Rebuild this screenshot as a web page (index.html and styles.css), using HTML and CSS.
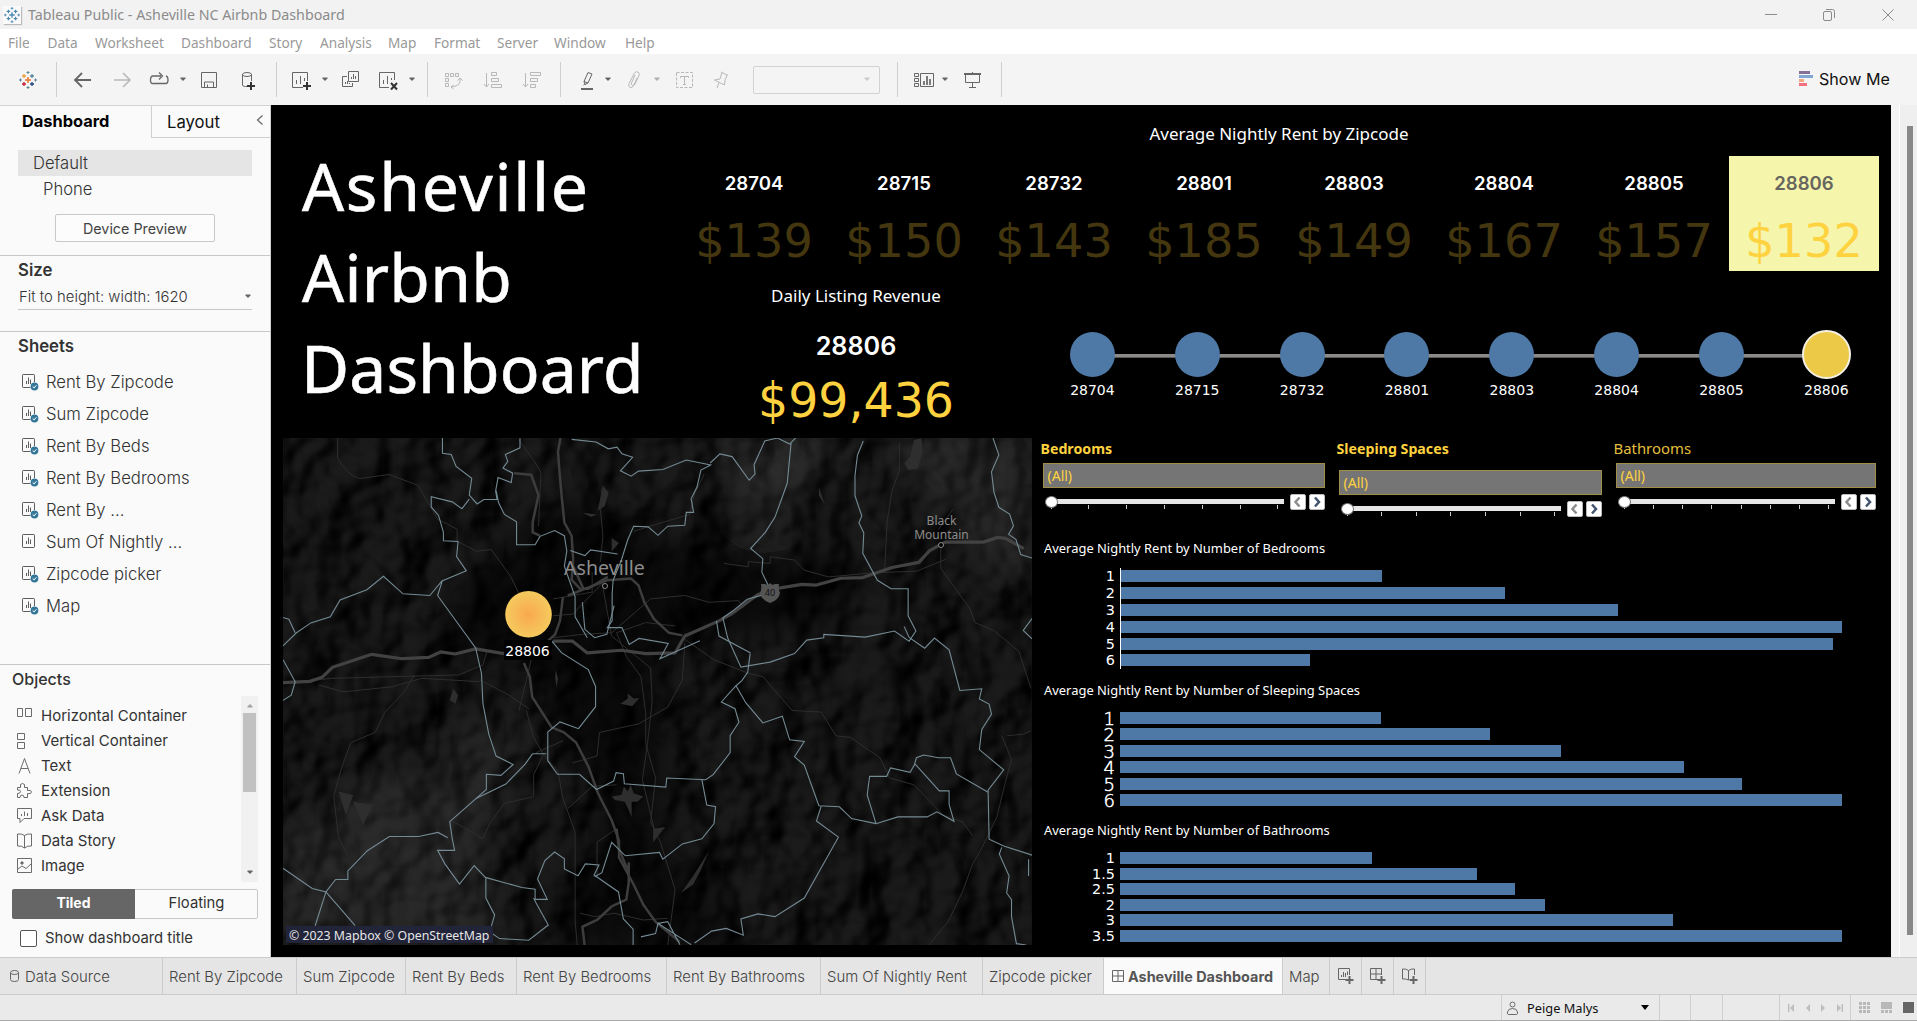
FILE: index.html
```html
<!DOCTYPE html>
<html lang="en">
<head>
<meta charset="utf-8">
<title>Tableau Public - Asheville NC Airbnb Dashboard</title>
<link rel="stylesheet" href="styles.css">
</head>
<body>
<svg class="defs" aria-hidden="true">
  <symbol id="logo" viewBox="0 0 18 18"><g fill="none" stroke-width="1.3">
    <path stroke="var(--c1)" stroke-width="1.5" d="M9 6v6M6 9h6"/>
    <path stroke="var(--c2)" d="M5 3v4M3 5h4"/><path stroke="var(--c3)" d="M13 3v4M11 5h4"/>
    <path stroke="var(--c4)" d="M5 11v4M3 13h4"/><path stroke="var(--c5)" d="M13 11v4M11 13h4"/>
    <path stroke="var(--c3)" stroke-width="1" d="M9 0v3M7.500 1.500h3M1.500 7.500v3M0 9h3M16.500 7.500v3M15 9h3M9 15v3M7.500 16.500h3"/></g></symbol>
  <symbol id="sheet" viewBox="0 0 17 17"><g fill="none" stroke="#5c5c5c">
    <path d="M8.500 13.500H1.200q-.7 0-.7-.7V1.200q0-.7.7-.7h10.600q.7 0 .7.7V8"/><path d="M4.500 10V7M6.500 10V3.500M8.500 10V5.500"/></g>
    <circle cx="12.500" cy="12.500" r="3.900" fill="#35789b"/><path d="M10.700 12.500l1.400 1.400 2.300-2.600" fill="none" stroke="#fff"/></symbol>
  <symbol id="sheet-plain" viewBox="0 0 17 17"><g fill="none" stroke="#5c5c5c"><rect x=".5" y=".5" width="12" height="13" rx=".7"/><path d="M4.500 10V7M6.500 10V3.500M8.500 10V5.500"/></g></symbol>
  <symbol id="caret" viewBox="0 0 8 5"><path d="M1.500 .5h5v1L4 4 1.500 1.500z" fill="currentColor"/></symbol>
</svg>

<div class="window">
  <header class="titlebar">
    <svg class="app-icon" width="18" height="18"><rect width="18" height="18" fill="#fafafa"/><use href="#logo" x="1" y="1" width="16" height="16"/></svg>
    <span class="app-title">Tableau Public - Asheville NC Airbnb Dashboard</span>
    <svg class="win-buttons" width="136" height="16" fill="none" stroke="#8b8b8b"><path d="M1 7.500h12M118.500 2.500l11 11M129.500 2.500l-11 11"/><rect x="59.500" y="4.500" width="8" height="9" rx="1.500"/><path d="M62 2.500h6.500q2 0 2 2V11"/></svg>
  </header>

  <nav class="menubar"><span>File</span><span>Data</span><span>Worksheet</span><span>Dashboard</span><span>Story</span><span>Analysis</span><span>Map</span><span>Format</span><span>Server</span><span>Window</span><span>Help</span></nav>

  <div class="toolbar">
    <svg class="ic color-logo" viewBox="0 0 24 24"><use href="#logo" x="3" y="3" width="18" height="18"/></svg>
    <i class="rule"></i>
    <svg class="ic" viewBox="0 0 24 24"><path stroke-width="1.8" d="M20 12H5M11 5l-7 7 7 7"/></svg>
    <svg class="ic dim" viewBox="0 0 24 24"><path stroke-width="1.500" d="M4 12h15M13 5l7 7-7 7"/></svg>
    <svg class="ic" viewBox="0 0 24 24"><path stroke-width="1.300" d="M14 8H6q-2.500 0-2.500 4T6 15.500h13q2 0 2-3.500t-2-4M12 4.500L15.500 8 12 11.500"/></svg>
    <svg class="caret"><use href="#caret"/></svg>
    <svg class="ic" viewBox="0 0 24 24"><path d="M4.500 4.500h15v15h-15zM7.500 19v-5h9v5M10.500 16.500V19"/></svg>
    <svg class="ic" viewBox="0 0 24 24"><path d="M13 18.500H9.500Q6.500 18.500 6.500 17V6M15.500 13V6"/><ellipse cx="11" cy="6.500" rx="4.500" ry="2"/><path stroke="#333" stroke-width="2" d="M15 14v8M11 18h8"/></svg>
    <i class="rule"></i>
    <svg class="ic" viewBox="0 0 24 24"><path d="M14 19.500H3.500v-15h15V13M7.500 16v-4M11.500 16V8M15.500 13v-3"/><path stroke="#333" stroke-width="2" d="M18 14v8M14 18h8"/></svg>
    <svg class="caret"><use href="#caret"/></svg>
    <svg class="ic" viewBox="0 0 24 24"><path d="M9.500 3.500h10v10h-10zM12.500 11V9M14.500 11V6M16.500 11V8M8 8.500H3.500v10h10V15M6.500 16v-2M8.500 16v-3M10.500 16v-1"/></svg>
    <svg class="ic" viewBox="0 0 24 24"><path d="M13 19.500H3.500v-15h15V12M7.500 16v-4M11.500 16V8M15.500 12v-2"/><path stroke="#333" stroke-width="2" d="M15 15l6 6.500M21 15l-6 6.500"/></svg>
    <svg class="caret"><use href="#caret"/></svg>
    <i class="rule"></i>
    <svg class="ic dim" viewBox="0 0 24 24"><path d="M4.500 5.500h3v3h-3zM9.500 5.500h3v3h-3zM14.500 5.500h3v3h-3zM4.500 10.500h3v3h-3zM4.500 15.500h3v3h-3zM19 10v3q0 5-9 6M16.500 12.500L19 10l2.500 2.500M12.500 17L10 19l2.500 2"/></svg>
    <svg class="ic dim" viewBox="0 0 24 24"><path d="M5.500 5v14M3 16l2.500 3L8 16M10.500 4.500h5v3h-5zM10.500 10.500h7v3h-7zM10.500 16.500h10v3h-10z"/></svg>
    <svg class="ic dim" viewBox="0 0 24 24"><path d="M5.500 5v14M3 16l2.500 3L8 16M10.500 4.500h10v3h-10zM10.500 10.500h7v3h-7zM10.500 16.500h5v3h-5z"/></svg>
    <i class="rule"></i>
    <svg class="ic" viewBox="0 0 24 24"><path d="M9 13.500l4-9 4 1.500-4 9-3 1.500zM9 13.500l4 1.500M8.500 17l1.500-1"/><path stroke-width="2" d="M6 21h12"/></svg>
    <svg class="caret"><use href="#caret"/></svg>
    <svg class="ic dim" viewBox="0 0 24 24"><path d="M13 7l-3.500 8q-.5 2 1 2.300T13 16l4-8.500q1-2.500-1-3.500t-3.500 1L7 15.500q-1 3 1 4 2 .5 3.500-1.500L15 10"/></svg>
    <svg class="caret dim"><use href="#caret"/></svg>
    <svg class="ic dim" viewBox="0 0 24 24"><rect x="4.500" y="4.500" width="16" height="15" stroke-dasharray="3 1.500"/><path d="M8.500 10V8.500h8V10M12.500 8.500v8M11 16.500h3"/></svg>
    <svg class="ic dim" viewBox="0 0 24 24"><path d="M11 4l6 3M12 4.500L10 11l-5.500 1 10 5 .5-5 2.500-5.500M9 14.500L7 20"/></svg>
    <div class="combo"><svg class="caret"><use href="#caret"/></svg></div>
    <i class="rule"></i>
    <svg class="ic" viewBox="0 0 24 24"><path d="M2.500 5.500h4v3h-4zM2.500 10.500h4v3h-4zM2.500 15.500h4v3h-4zM8.500 5.500h13v13h-13z"/><path stroke-width="1.700" d="M12 17v-4M15 17V8M18 17v-6"/></svg>
    <svg class="caret"><use href="#caret"/></svg>
    <svg class="ic" viewBox="0 0 24 24"><path stroke-width="2" d="M3 6h17"/><path d="M4.500 6v8.500h14V6M11.500 4v1M11.500 14.500v5M8 19.500h7"/></svg>
    <i class="rule"></i>
    <div class="show-me"><svg width="14" height="16"><path fill="#85709a" d="M0 0h11v3H0z"/><path fill="#80a6d2" d="M0 4h14v3H0z"/><path fill="#f2a684" d="M0 8h5v3H0z"/><path fill="#f4707f" d="M0 12h8v3H0z"/></svg>Show Me</div>
  </div>

  <main class="workspace">
    <aside class="sidebar">
      <div class="side-tabs"><b>Dashboard</b><div class="layout-tab">Layout<svg width="8" height="10"><path d="M6.500 .5L1.500 5l5 4.500" fill="none" stroke="#666" stroke-width="1.200"/></svg></div></div>
      <section class="device">
        <div class="device-default">Default</div>
        <div class="device-phone">Phone</div>
        <button>Device Preview</button>
      </section>
      <section class="size">
        <h2>Size</h2>
        <div class="size-select">Fit to height: width: 1620<svg class="caret"><use href="#caret"/></svg></div>
      </section>
      <section class="sheets">
        <h2>Sheets</h2>
        <ul>
          <li><svg><use href="#sheet"/></svg>Rent By Zipcode</li>
          <li><svg><use href="#sheet"/></svg>Sum Zipcode</li>
          <li><svg><use href="#sheet"/></svg>Rent By Beds</li>
          <li><svg><use href="#sheet"/></svg>Rent By Bedrooms</li>
          <li><svg><use href="#sheet"/></svg>Rent By ...</li>
          <li><svg><use href="#sheet-plain"/></svg>Sum Of Nightly ...</li>
          <li><svg><use href="#sheet"/></svg>Zipcode picker</li>
          <li><svg><use href="#sheet"/></svg>Map</li>
        </ul>
      </section>
      <section class="objects">
        <h2>Objects</h2>
        <div class="object-box">
          <ul>
            <li><svg><path d="M.5 1.500h5v8h-5zM8.500 1.500h6v8h-6z"/></svg>Horizontal Container</li>
            <li><svg><path d="M.5 1.500h7v6h-7zM.5 10.500h7v6h-7z"/></svg>Vertical Container</li>
            <li><svg><path d="M2 16.500L7.500 1.500 13 16.500M4 11.500h7"/></svg>Text</li>
            <li><svg><path d="M.5 8V5.500h3q-1-4 2-4t2 4h3v3q4-1 4 1.500t-4 1.500v4H7q0-2.500-2-2.500t-2 2.500H.5v-4q3 0 3-2t-3-1.500z"/></svg>Extension</li>
            <li><svg><path d="M.5 1.500h14v10H7l-4 4v-4H.5zM4.500 9V7M7.500 9V4.500M10.500 9V6"/></svg>Ask Data</li>
            <li><svg><path d="M7.500 3.500Q5 1.500.5 2v12q4.500-.5 7 2 2.500-2.500 7-2V2q-4.500-.5-7 1.500V16"/></svg>Data Story</li>
            <li><svg><path d="M.5 1.500h14v14H.5zM1 12l4-3 4 2.500L14 7"/><circle cx="5" cy="6" r="1.200" fill="#6b6b6b"/></svg>Image</li>
          </ul>
          <div class="scroller"><svg class="caret up"><use href="#caret"/></svg><i></i><svg class="caret"><use href="#caret"/></svg></div>
        </div>
        <div class="mode"><b>Tiled</b><span>Floating</span></div>
        <label class="show-title"><i></i>Show dashboard title</label>
      </section>
    </aside>

    <div class="dashboard">
      <div class="top">
        <h1><span class="l1">Asheville</span><span class="l2">Airbnb</span><span class="l3">Dashboard</span></h1>
        <div class="summary">
          <h3>Average Nightly Rent by Zipcode</h3>
          <div class="zips">
            <div><b>28704</b><span>$139</span></div><div><b>28715</b><span>$150</span></div><div><b>28732</b><span>$143</span></div><div><b>28801</b><span>$185</span></div><div><b>28803</b><span>$149</span></div><div><b>28804</b><span>$167</span></div><div><b>28805</b><span>$157</span></div><div class="on"><b>28806</b><span>$132</span></div>
          </div>
          <div class="second">
            <div class="revenue"><h3>Daily Listing Revenue</h3><b>28806</b><span>$99,436</span></div>
            <div class="picker">
              <div><i></i>28704</div><div><i></i>28715</div><div><i></i>28732</div><div><i></i>28801</div><div><i></i>28803</div><div><i></i>28804</div><div><i></i>28805</div><div class="on"><i></i>28806</div>
            </div>
          </div>
        </div>
      </div>

      <div class="bottom">
        <div class="map">
          <svg class="terrain" viewBox="16 24 1536 1500" preserveAspectRatio="none">
            <defs>
              <filter id="relief" x="0" y="0" width="100%" height="100%" color-interpolation-filters="sRGB"><feTurbulence type="fractalNoise" baseFrequency=".009 .006" numOctaves="3" seed="4"/><feDiffuseLighting surfaceScale="50" lighting-color="#1b1b1b"><feDistantLight azimuth="215" elevation="48"/></feDiffuseLighting></filter>
              <filter id="soft"><feGaussianBlur stdDeviation="40"/></filter>
            </defs>
            <rect x="16" y="24" width="1536" height="1500" filter="url(#relief)"/>
            <g filter="url(#soft)">
              <path class="valley" d="M400 430L600 200 780 330 1240 420 1100 560 800 640 790 1200 960 1524 560 1524 690 1080 560 900 560 700 330 640z"/>
              <path class="ridge" d="M400 850l80 60-60 300 20 314H16V1240l130-180 200-60zM1250 24h302v480l-100-150zM880 24h300l-180 300z"/>
            </g>
            <g class="lake"><path d="M1310 30l15-6 3 40-10 50-20 5-8-20 12-20zM672 165l12 20-8 40-15 15zM365 765l10 20-5 25-12-10zM708 810l15-15 0-15 12 15 12-2-15 25zM575 710l5 25-3 28-3-30zM690 1085l20-5 5-25 8 15 6-20 6 25 20 10-12 15-12 0 0 45-14-45-20-5zM775 1180l25-5-25 45zM890 1245l-18 60-15 40-25 25 25-50zM690 320l15 15-15 25zM1115 170l12 50-12-25zM630 245l30 5-12 8zM130 1070l30 10-15 60zM160 1100l40 10-20 60z"/></g>
            <g class="minor">
              <path d="M128 24v60q20 50 45 60l60-12 60 32 40 100 40 30 0 35 40 30 30-5 40 80 20 60 30 35M500 30l30 60 15 35-5 160M670 175l-3 60 5 80-5 75M735 300l45-20 70-30 10-60 20-60M920 395l50 10 0-15 45 5 0-20 50 10 20 30 50 20 90-12 90-5 60-35M1280 40l0 80-15 60-10 90-5 140M1365 350v60l30 60 30 60 10 40 40 25 50 60 25 110M1390 235l-30 60M1500 905l35-5 15-10M1490 905l20 70-15 80-15 90-30 90-20 50-20 80-30 90-40 70"/>
              <path d="M16 750l100-15 260-10 50-30 8-40M90 755l50 20 100-15 60-25 120 10M285 725l-20 50-40 60-20 60-50 30-20 80-15 80 10 120 20 60M420 740l60 45 40 40M570 500l80-20 0-60M570 550l40-5 60-90M570 615l60-10 60-5 80-100 70-10 50 20 60-5 10 20M700 600l60-30 60 10M700 600l20 70 30 60 10 110 0 90 20 100-10 130 20 60 30 140-20 220M670 450l20 160 80 95 3 100-10 130-10 100 25 150M840 620l60 60 70 40 30 10 60 100 60 5 30 70 30 5 60 60 20 60 50 20 60 90 40 20 20 40"/>
              <path d="M840 630l-5 110-30 80-60 50-80 25-5 70-50 20M500 830l15-90 10-60M515 830l15 80 20 50 30 50 10 80 25 100 0 260 10 174M600 1120l50-65 50-5M550 960l-20 60 0 65-60 20-30 60-15 45-15-15-50-40M700 1180l-40 40 0 100M590 920l-55 35M625 1430l30 10 40-10 60 20 50-5"/>
            </g>
            <g class="major">
              <path d="M585 24l-5 40 3 60 5 80 5 70 15 40 3 70-3 60 20 30M490 128l35 5 15 60-12 80 0 30 15 10M600 490l80-45 50-5 15 20 12 50 20 50 30 40 28 8M590 495l-6 70-10 40-15 20M510 690l12 40 5 60 40 90 25 15 25 30 25 70 20 80 28 80 15 60 0 50 30 80 20 60 25 50 50 60"/>
              <path d="M610 400l22 70 10 0 40-35M700 1180l5 60 20 70M725 1280l0 60-5 50-30 20-30 40-30 20 5 60"/>
            </g>
            <path class="highway" d="M16 748l55-4 25-12 22-30 80-38 62 13 55-4 24-16 30 6 42-15 58 14M570 625l40 0 30 35 70-8 50 10 60-2 20-50 70-45 25-20 55-58 40-18 50-12 30 2 50-20 45-2 60-30 55-15 22-35 32-25 78 0 30-14 16 3 37 30"/>
            <g class="bounds">
              <path d="M343 24v45l18 4 10 35 32 35-5 50 16 26 14-13 27 0-3-25 5-40 27 15 3-28-20-15 10-20-5-20 30-20v-28M453 180l5 35 12 35 25 22v68l38 0 10-25 30-17 20 15 5 45-5 45 22 90 0 60 25 62"/>
              <path d="M398 205l-15 28-20-20-43-15 0 30 15 25 10 50 0 25 30 2-3 45 20 42-50 30-25 43-55-5-40-52-34 40-55 30-20 50-40 18-30 30-65 90M343 445l-10 45 78 155 12 75 3 90 12 90 15 65 35 25-25 32-30-3 0 45-75 95 5 50 5 35-35 0 15 40 30 60 30-55 23 35 75 30 27 5 0 30 25 0-20-60 15-55 20-25 20 20 0 30 28 20 15-35 28 3-10 30 50 50 10 80 20 30 0 60"/>
              <path d="M608 28l50 8 25 20 18-5 10 20 22 10-25 40 22 16 15-15 50-5 48-28 50 15-20 15-8 50-12 35 5 40-15 0-3 38-35 3-20 27-20-25-30-2-12 40-13 60-17 60-2 40 0 80-10 20 30 0 15 50 20-18 60 15-17 45 82-53"/>
              <path d="M892 98l20-27 25 8 35 70 12-18-2-28 22-70 26-9 25 18 12-18M1058 38l-8 120-25 100-20 45-30 48 25 30-2 40 20 60-50 20-30 35-20 20 10 60 27 86 60-15 50-25 25-40 35-7 0-10 85 8 60-18 30 30 14-30-16-45 0-80-35 0-28-25-30-80 2-60-10-30 6-20-14-60 0-60 5-60 12-42M1290 582l10 32 32 32 20-30 30 35 22 120 45-5-5 30 20 15 5 30-20 45-5 60 50 60-32 60 2 145 30 20 60 28"/>
              <path d="M974 662l-5 55-12 25-12 15-30 48 28 20 8 40-18 40 0 50-35 65-15 15-80-5-2 27-85-10-2-30-15-3-5 25-35 25-35-45-45 0-20-40v-85l25-30 38 20 35-65 0-60-15-50-55-50-20-35M975 660l-65-50-5-45"/>
              <path d="M945 757l20 50 35 60 40-20 15 70 30 5-20 45 20 25 15 60 15 60 42 3 25 35 50 15 45-20 60 0 20-15 35 28-10-50 0-40-20 0-50-80-10 25-40-13-8 25-35 0-5 55 18 85M1310 995l5-25 15-8 30 8 25 0 12 48 65 54M1120 1112l-10 45 45 48-70 180-60 55-35-8-35 15 5 48-35-20-30 8-35 35"/>
              <path d="M875 1035l10 75 18 5-3 50-25 45-40 15-40 45-7-20-70 10-28-40-20 90-15 12M528 958h28M528 958l-15 30-40 60-60 42M16 555l12 5 13 40M16 680l25 65-8 40-17 15M16 1297l60 60 28 10-22 100M104 1367l60 100M104 1367l20-37 25 0 0-25 40-60 45-42 60 0 40-12 20 16M432 1325l0 60 18 50-10 50 20 20 60 5 40-45-25-65-5-15M785 1460l20-5 25 68M750 1500l30-10 5-30 68 63M1472 24l12 50-15 50 5 60 10 45 22 20 8 35-10 25 15 15 10 45 23 10M1552 558l-18 35 18 25M1490 1235l-5 20 20 65-5 50 10 20 0 50 10 80 20 4M1545 1270v50M605 357l30 15 12-17 55 12M630 510l5 80 20 25 25-10 15-85"/>
            </g>
          </svg>
          <svg class="marks" viewBox="0 0 749 507">
            <defs><radialGradient id="sun"><stop offset="0" stop-color="#f9a84f"/><stop offset="1" stop-color="#f5ca5d"/></radialGradient></defs>
            <path d="M478 146h4q3 2 5-1 2 3 5 1h4q-1 5 1 9-1 7-10 10-9-3-10-10 2-4 1-9z" fill="#555"/>
            <text class="shield" x="487" y="158">40</text>
            <text class="city" x="321.500" y="136.500">Asheville</text><circle class="dot" cx="322" cy="148" r="2.500"/>
            <text class="town" x="658.500" y="86.500">Black</text><text class="town" x="658.500" y="100.500">Mountain</text><circle class="dot" cx="658" cy="107" r="2.500"/>
            <circle cx="245.500" cy="176.300" r="23.300" fill="url(#sun)"/>
            <rect x="221" y="202" width="48" height="20" fill="#000" opacity=".9"/><text class="mark-label" x="244.500" y="217.500">28806</text>
            <rect x="3" y="488" width="207" height="17" fill="#22243a"/><text class="credit" x="6" y="501.500">© 2023 Mapbox © OpenStreetMap</text>
          </svg>
        </div>

        <div class="detail">
          <div class="filters">
            <div class="filter f1"><b>Bedrooms</b><div class="value">(All)</div><div class="slider"><div class="track"><i></i><i></i><i></i><i></i><i></i><i></i><i></i></div><svg class="step"><path d="M9.500 3.500l-4 4.500 4 4.500"/></svg><svg class="step next"><path d="M6 3.500l4 4.500-4 4.500"/></svg></div></div>
            <div class="filter f2"><b>Sleeping Spaces</b><div class="value">(All)</div><div class="slider"><div class="track"><i></i><i></i><i></i><i></i><i></i><i></i><i></i></div><svg class="step"><path d="M9.500 3.500l-4 4.500 4 4.500"/></svg><svg class="step next"><path d="M6 3.500l4 4.500-4 4.500"/></svg></div></div>
            <div class="filter f3"><span>Bathrooms</span><div class="value">(All)</div><div class="slider"><div class="track"><i></i><i></i><i></i><i></i><i></i><i></i><i></i><i></i></div><svg class="step"><path d="M9.500 3.500l-4 4.500 4 4.500"/></svg><svg class="step next"><path d="M6 3.500l4 4.500-4 4.500"/></svg></div></div>
          </div>
          <section class="chart beds"><h4>Average Nightly Rent by Number of Bedrooms</h4>
            <div class="bars">
              <div><span>1</span><i style="width:261px"></i></div><div><span>2</span><i style="width:384px"></i></div><div><span>3</span><i style="width:497px"></i></div><div><span>4</span><i style="width:721px"></i></div><div><span>5</span><i style="width:712px"></i></div><div><span>6</span><i style="width:189px"></i></div>
            </div></section>
          <section class="chart spaces"><h4>Average Nightly Rent by Number of Sleeping Spaces</h4>
            <div class="bars">
              <div><span>1</span><i style="width:261px"></i></div><div><span>2</span><i style="width:370px"></i></div><div><span>3</span><i style="width:441px"></i></div><div><span>4</span><i style="width:564px"></i></div><div><span>5</span><i style="width:622px"></i></div><div><span>6</span><i style="width:722px"></i></div>
            </div></section>
          <section class="chart baths"><h4>Average Nightly Rent by Number of Bathrooms</h4>
            <div class="bars">
              <div><span>1</span><i style="width:252px"></i></div><div><span>1.5</span><i style="width:357px"></i></div><div><span>2.5</span><i style="width:395px"></i></div><div><span>2</span><i style="width:425px"></i></div><div><span>3</span><i style="width:553px"></i></div><div><span>3.5</span><i style="width:722px"></i></div>
            </div></section>
        </div>
      </div>
    </div>
    <div class="vscroll"><i></i></div>
  </main>

  <div class="tabs">
    <span><svg width="9" height="12"><path d="M.5 2.500v7q0 2 4 2t4-2v-7M.5 2.500q0-2 4-2t4 2-4 2-4-2"/></svg>Data Source</span><span>Rent By Zipcode</span><span>Sum Zipcode</span><span>Rent By Beds</span><span>Rent By Bedrooms</span><span>Rent By Bathrooms</span><span>Sum Of Nightly Rent</span><span>Zipcode picker</span><span class="active"><svg width="12" height="12"><path d="M.5 .5h11v11H.5zM6 .5v11M.5 6h11"/></svg>Asheville Dashboard</span><span>Map</span>
    <span><svg width="16" height="16"><path d="M8 11.500H.5V.5h11V7M3.500 9V7M5.500 9V4M7.500 9V5M9.500 7V3.500"/><path stroke-width="2" d="M11.500 8v8M7.500 12h8"/></svg></span>
    <span><svg width="16" height="16"><path d="M8 11.500H.5V.5h11V7M6 .5v11M.5 6h11"/><path stroke-width="2" d="M11.500 8v8M7.500 12h8"/></svg></span>
    <span><svg width="16" height="16"><path d="M6.500 2.500Q4 .5.500 1v10q3-.5 6 1V2.500Q9 .5 12.500 1v6"/><path stroke-width="2" d="M11.500 8v8M7.500 12h8"/></svg></span>
    <span class="rest"></span>
  </div>

  <footer class="status">
    <div></div>
    <div class="user"><svg width="11" height="14" fill="none" stroke="#6b6b6b"><circle cx="5.500" cy="3.500" r="2.500"/><path d="M1.500 13.500q-1.500 0-1-2.500.5-3.500 5-3.500t5 3.500q.5 2.500-1 2.500z"/></svg>Peige Malys<svg class="caret"><path d="M0 0h8L4 5z"/></svg></div>
    <div></div><div></div><div></div>
    <div class="pager"><svg width="58" height="10" fill="#bdbdbd"><path d="M0 1h1.500v8H0zM6 1v8L2 5zM22 1v8l-4-4zM33 1v8l4-4zM49 1v8l4-4zM53.500 1H55v8h-1.500z"/></svg></div>
    <div class="views"><svg width="56" height="12"><path fill="#b8b8b8" d="M0 0h3v3H0zM4 0h3v3H4zM8 0h3v3H8zM0 4h3v3H0zM4 4h3v3H4zM8 4h3v3H8zM0 8h3v3H0zM4 8h3v3H4zM8 8h3v3H8zM22 0h11v7H22zM22 8h3v3h-3zM26 8h3v3h-3zM30 8h3v3h-3z"/><path fill="#666" d="M44 0h11v11H44z"/></svg></div>
  </footer>
</div>
</body>
</html>
```
FILE: styles.css
```css
* { box-sizing: border-box; }
body { margin: 0; background: #f4f4f4; font-family: Inter, "Liberation Sans", sans-serif; color: #333; }
h1, h2, h3, h4, ul { margin: 0; padding: 0; font-weight: 400; list-style: none; }
.defs { position: absolute; width: 0; height: 0; }
.window { display: flex; flex-direction: column; width: 1917px; height: 1021px; overflow: hidden; white-space: nowrap; }
.caret { display: block; width: 8px; height: 5px; color: #666; }

.titlebar { display: flex; align-items: center; height: 29px; padding-left: 3px; background: #f2f2f2; font: 14.25px "Noto Sans", sans-serif; color: #8b8b8b; }
.app-icon { --c1: #4b88b0; --c2: #4b88b0; --c3: #4b88b0; --c4: #4b88b0; --c5: #4b88b0; box-shadow: 1px 1px 1px #bbb; }
.app-title { margin-left: 7px; }
.win-buttons { margin-left: auto; margin-right: 17px; }

.menubar { display: grid; grid-template-columns: 39.5px 47.5px 86px 88px 51px 68px 46px 63px 57px 71px auto; align-items: center; height: 25px; padding: 2px 0 0 8px; background: #fff; font: 13.65px "Noto Sans", sans-serif; color: #999; }

.toolbar { display: grid; grid-template-columns: 40px 15px 39px 37px 32px 18px 39px 40px 13px 32px 18px 37px 32px 19px 14px 40px 39px 40px 15px 29px 18px 31px 19px 38px 43px 144px 15px 29px 20px 40px 798px auto; align-items: center; justify-items: start; height: 51px; padding-left: 16px; background: #f4f4f4; }
.ic { width: 24px; height: 24px; fill: none; stroke: #666; }
.ic.dim { stroke: #b8b8b8; }
.caret.dim { color: #b0b0b0; }
.color-logo { --c1: #e8762c; --c2: #e8a33c; --c3: #5b879b; --c4: #c72037; --c5: #1f447e; }
.rule { width: 1px; height: 35px; background: #cfcfcf; }
.combo { display: flex; align-items: center; justify-content: flex-end; width: 127px; height: 28px; padding-right: 8px; border: 1px solid #d2d2d2; border-radius: 2px; }
.combo .caret { color: #ccc; }
.show-me { display: flex; align-items: center; gap: 6px; margin-top: -2px; font-size: 16.1px; color: #111; }

.workspace { display: flex; height: 852px; }
.sidebar { display: flex; flex-direction: column; width: 271px; border-top: 1px solid #d2d2d2; border-right: 1px solid #cfcfcf; background: #fafafa; }
.side-tabs { display: flex; height: 32px; }
.side-tabs b { width: 151px; padding: 4px 0 0 22px; font-size: 16.4px; line-height: 22px; color: #000; }
.layout-tab { display: flex; flex: 1; align-items: center; justify-content: space-between; padding: 0 6px 0 15px; border-left: 1px solid #cfcfcf; border-bottom: 1px solid #cfcfcf; font-size: 16.7px; color: #111; }
.layout-tab svg { margin-top: -4px; }
.device { height: 118px; padding: 12px 18px 0; border-bottom: 1px solid #c8c8c8; font-size: 16.600px; font-weight: 300; }
.device-default { height: 26px; padding-left: 15px; line-height: 26px; background: #e5e5e5; }
.device-phone { height: 26px; padding-left: 25px; line-height: 26px; }
.device button { display: block; width: 160px; height: 28px; margin: 12px 0 0 37px; padding: 0; border: 1px solid #c8c8c8; border-radius: 2px; background: #fcfcfc; font: 400 14.3px Inter, sans-serif; color: #444; }
.size { height: 76px; padding: 3px 18px 0; border-bottom: 1px solid #c8c8c8; }
.sidebar h2 { font-size: 16.800px; font-weight: 600; line-height: 22px; }
.size-select { display: flex; align-items: center; justify-content: space-between; height: 26px; margin-top: 3px; padding-left: 1px; border-bottom: 1px solid #c8c8c8; font-size: 14.850px; font-weight: 300; }
.sheets { height: 333px; padding: 3px 18px 0; border-bottom: 1px solid #c8c8c8; }
.sheets ul { margin-top: 9px; }
.sheets li { display: flex; align-items: center; height: 32px; padding-left: 4px; font-size: 16.700px; font-weight: 300; }
.sheets svg { width: 17px; height: 17px; margin-right: 7px; }
.objects { padding: 3px 12px 0; }
.sidebar .objects h2 { font-size: 16px; font-weight: 500; }
.object-box { display: flex; justify-content: space-between; height: 186px; margin-top: 6px; }
.object-box ul { padding: 7px 0 0 5px; }
.object-box li { display: flex; align-items: center; height: 25px; font-size: 15px; }
.object-box li svg { width: 17px; height: 17px; margin-right: 7px; fill: none; stroke: #6b6b6b; }
.scroller { display: flex; flex-direction: column; align-items: center; width: 17px; padding: 7px 0; background: #f1f1f1; }
.scroller i { width: 13px; height: 79px; margin: 5px 0 auto; background: #c1c1c1; }
.scroller .up { transform: rotate(180deg); color: #a3a3a3; }
.mode { display: flex; height: 30px; margin-top: 7px; border: 1px solid #c8c8c8; border-radius: 2px; font-size: 14.8px; line-height: 27px; text-align: center; }
.mode b { width: 123px; margin: -1px; height: 30px; background: #666; color: #fff; border-radius: 2px 0 0 2px; font-size: 14px; }
.mode span { flex: 1; padding-left: 2px; color: #333; }
.show-title { display: flex; align-items: center; margin: 11px 0 0 8px; font-size: 14.850px; line-height: 17px; }
.show-title i { width: 17px; height: 17px; margin-right: 8px; border: 1px solid #555; border-radius: 2px; background: #fff; }

.dashboard { width: 1620px; background: #000; color: #fff; font-family: "Noto Sans", sans-serif; }
.top { display: flex; height: 333px; }
h1 { width: 408px; padding: 35px 0 0 31px; font-size: 66px; line-height: 91px; -webkit-text-stroke: .6px #fff; }
h1 span { display: block; }
.l1 { letter-spacing: 1.700px; }
.l2 { letter-spacing: .3px; }
.l3 { margin-left: -1px; letter-spacing: .1px; }
.summary { width: 1200px; padding-top: 17px; text-align: center; }
h3 { font-size: 17px; line-height: 24px; }
.zips { display: flex; height: 115px; margin-top: 10px; }
.zips div { display: flex; flex-direction: column; width: 150px; padding-top: 15px; }
.zips b { font: 600 18.6px/24px Inter, sans-serif; }
.zips span { margin-top: 19px; font: 46.2px/54px "DejaVu Sans", sans-serif; color: #44370f; }
.zips .on { background: #f5f5ac; }
.zips .on b { color: #66665e; }
.zips .on span { color: #ffd23f; }
.second { display: flex; }
.revenue { display: flex; flex-direction: column; width: 354px; padding-top: 13px; }
.revenue b { margin-top: 23px; font: 600 25.200px/30px Inter, sans-serif; }
.revenue span { margin-top: 13px; font: 47.4px/54px "DejaVu Sans", sans-serif; color: #ffd23f; }
.picker { display: flex; margin-left: 7px; padding-top: 61px; font: 14px/18px "DejaVu Sans", sans-serif; }
.picker div { position: relative; display: flex; flex-direction: column; align-items: center; width: 104.850px; }
.picker i { width: 45px; height: 45px; margin-bottom: 4px; border-radius: 50%; background: #4e79a7; z-index: 1; }
.picker div::before { content: ""; position: absolute; top: 22px; left: 0; width: 100%; height: 3px; background: #8c8a88; border-bottom: 1px solid #5a5856; }
.picker div:first-child::before { left: 50%; width: 50%; }
.picker .on::before { width: 50%; }
.picker .on i { width: 49px; height: 49px; margin: -2px 0 2px; background: #edc948; border: 2px solid #f4f0e2; }

.bottom { display: flex; height: 519px; }
.map { position: relative; width: 749px; height: 507px; margin-left: 12px; }
.map svg { position: absolute; inset: 0; width: 749px; height: 507px; }
.terrain path { fill: none; vector-effect: non-scaling-stroke; }
.terrain .valley { fill: #000; opacity: .6; }
.terrain .ridge { fill: #fff; opacity: .07; }
.terrain .lake path { fill: #2e2e2e; }
.minor { stroke: #2d2d2d; stroke-width: 1; }
.major { stroke: #3d3d3d; stroke-width: 2.500; stroke-linejoin: round; }
.highway { stroke: #424242; stroke-width: 3.200; stroke-linejoin: round; }
.bounds { stroke: #748a93; stroke-width: 1.100; }
.marks { font-family: "Noto Sans", sans-serif; }
.marks text { text-anchor: middle; }
.city { font-size: 19.600px; fill: #8c8c8c; }
.town { font-size: 12px; fill: #8c8c8c; }
.shield { font-size: 9px; fill: #111; }
.dot { fill: #000; stroke: #8c8c8c; }
.mark-label { font: 14px "DejaVu Sans", sans-serif; fill: #fff; }
.marks .credit { font-size: 12.330px; fill: #e6e6e6; text-anchor: start; }

.detail { width: 859px; }
.filters { display: grid; grid-template-columns: 296px 277px 266px; height: 101px; padding-left: 8.500px; color: #ffd23f; font-size: 14.2px; line-height: 20px; }
.filter > b, .filter > span { display: block; padding-top: 1px; height: 20px; }
.filter > span { padding-top: 0; font-size: 14.900px; color: #e3bf3f; }
.value { height: 25px; margin: 5px 0 0 2px; padding: 2px 0 0 4px; border: 1px solid #a08e45; background: #757575; font-size: 14px; line-height: 20px; }
.f1 .value { width: 282px; }
.f2 .value { width: 263px; margin-top: 12px; }
.f3 .value { width: 260px; }
.slider { display: flex; align-items: flex-start; gap: 3px; margin: 6px 0 0 10px; }
.track { position: relative; display: flex; justify-content: space-between; height: 5px; margin: 5px 3px 0 0; padding-right: 5px; background: #e6e6e6; }
.track i { width: 1px; height: 4px; margin-top: 6px; background: #c9c9c9; }
.track::before { content: ""; position: absolute; left: -6px; top: -3px; width: 11px; height: 10px; border-radius: 50%; background: #fff; border: 1px solid #777; }
.f1 .track { width: 233px; }
.f2 .track { width: 214px; }
.f3 .track { width: 211px; }
.step { width: 16px; height: 16px; border: 1px solid #bbb; border-radius: 2px; background: #fff; fill: none; stroke: #8d8d8d; stroke-width: 2.500; }
.step path { transform: translate(-1px, -1px); }
.step.next { stroke: #44546f; }

.chart h4 { padding-left: 12px; font-size: 12.930px; line-height: 18px; }
.bars { margin-left: 88px; }
.bars div { display: flex; align-items: center; height: var(--pitch); }
.bars i { height: 12px; background: #4e79a7; }
.bars span { width: 60px; margin-left: -65px; margin-right: 5px; text-align: right; font: 14.400px/14px "DejaVu Sans", sans-serif; }
.beds { --pitch: 16.800px; height: 142px; }
.beds .bars { margin-top: 11px; border-left: 1px solid #fff; }
.beds .bars span { margin-left: -66px; margin-right: 6px; }
.spaces { --pitch: 16.400px; height: 140px; }
.spaces .bars { margin-top: 10.800px; }
.spaces .bars span { padding-top: 2px; font-size: 18px; font-weight: 200; line-height: 14px; -webkit-text-stroke: .5px #fff; }
.baths { --pitch: 15.600px; }
.baths .bars { margin-top: 11.200px; }

.vscroll { flex: 1; margin-left: 8px; padding: 21px 0 0 7px; border-left: 1px solid #fff; background: #efefef; }
.vscroll i { display: block; width: 6px; height: 809px; background: #888; }

.tabs { display: grid; grid-template-columns: 163px 134px 109px 111px 150px 154px 162px 121px 179px 47px 32px 32px 32px auto; height: 38px; border: solid #cbcbcb; border-width: 1px 0; background: #e5e5e5; font-size: 14.900px; font-weight: 300; color: #444; }
.tabs span { display: flex; align-items: center; padding: 2px 0 0 6px; border-right: 1px solid #cbcbcb; }
.tabs svg { flex: none; fill: none; stroke: #666; }
.tabs span:first-child { padding-left: 10px; gap: 6px; }
.tabs span:first-child svg { margin-top: -3px; }
.tabs .active { padding-left: 8px; padding-top: 0; gap: 4px; background: #fafafa; font-size: 14.400px; font-weight: 700; color: #555; }
.tabs .active svg { margin-top: -1px; }
.tabs span:nth-child(n+11) { padding: 0 0 0 8px; }
.tabs .rest { border: 0; }

.status { display: grid; grid-template-columns: 1502px 158px 31px 32px 57px 71px auto; height: 26px; border-bottom: 1px solid #aaa; background: #eaeaea; }
.status div { display: flex; align-items: center; border-right: 1px solid #cfcfcf; }
.status .user { gap: 9px; padding-left: 5px; font: 12.800px "Noto Sans", sans-serif; color: #111; }
.user .caret { margin-left: auto; margin-right: 10px; }
.status .pager { padding-left: 8px; }
.status .views { padding-left: 8px; border: 0; }
```
